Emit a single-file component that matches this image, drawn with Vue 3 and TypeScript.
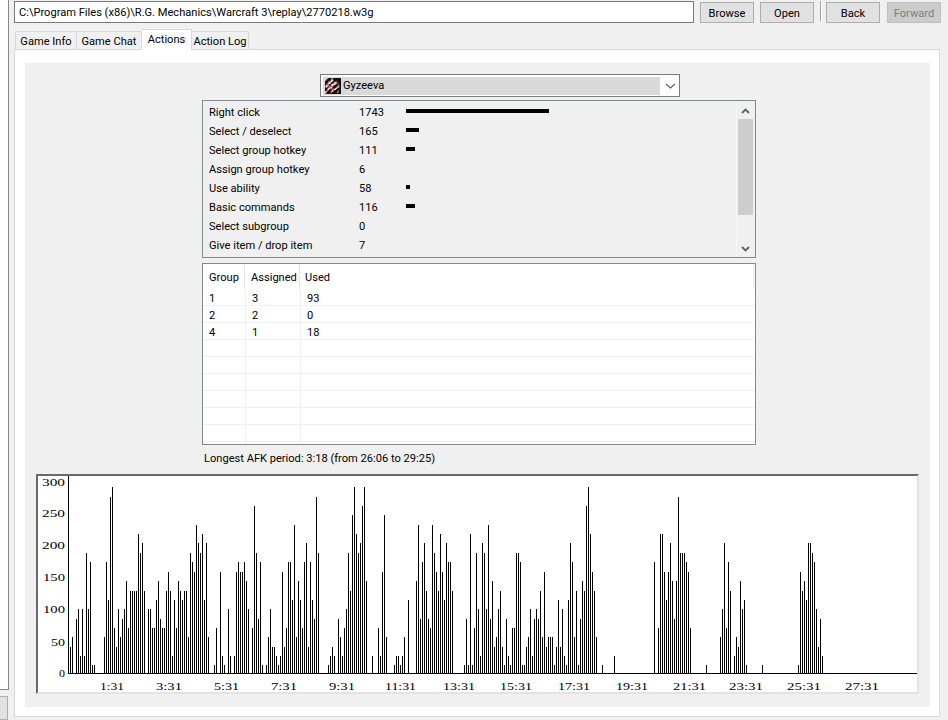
<script setup lang="ts">
const tabs = [
  { t: 'Game Info', w: 62 },
  { t: 'Game Chat', w: 65 },
  { t: 'Actions', w: 50 },
  { t: 'Action Log', w: 57 },
]
const actions = [
  { name: 'Right click', n: 1743, w: 143 },
  { name: 'Select / deselect', n: 165, w: 13 },
  { name: 'Select group hotkey', n: 111, w: 9 },
  { name: 'Assign group hotkey', n: 6, w: 0 },
  { name: 'Use ability', n: 58, w: 4 },
  { name: 'Basic commands', n: 116, w: 9 },
  { name: 'Select subgroup', n: 0, w: 0 },
  { name: 'Give item / drop item', n: 7, w: 0 },
]
const groups: string[][] = [
  ['1', '3', '93'],
  ['2', '2', '0'],
  ['4', '1', '18'],
  ['', '', ''],
  ['', '', ''],
  ['', '', ''],
  ['', '', ''],
  ['', '', ''],
  ['', '', ''],
  ['', '', ''],
]
const segs: [number, number[]][] = [
  [70, [516,486,0,432,402,543,402,543,234,402,261,570,570,0,0,0,0,
    486,261,375,66,36,459,516,402,486,432,402,318,459,348,348,348,348,177,234,204,348,0,
    402,402,459,459,375,318,432,459,459,348,291,348,543,375,459,318,348,375,348,348,486,234,261,291,150,204,234,177,375,204,486,0,0,
    570,459,0,291,543,570,0,402,543,0,543,291,261,291,291,261,318,402,0,459,93,234,432,261,570,0,570,486,402,516,516,543,570,543,291,516,459,261,261,375,150,486,318,375,459,261,204,516,261,375,432,66,234]],
  [328, [570,543,516,543,0,432,486,543,459,402,234,348,120,36,177,234,204,93,36,318]],
  [372, [543]],
  [378, [459,543,291,120,486]],
  [394, [570,543,543,570,543,486,0,375]],
  [416, [318,150,432,261,204,348,432,459,150,234,291,348,177,291,375,204,261,261,348]],
  [464, [570,432,570,177,570,459,234,402,543,204,234,402,150,432,318,516,486,402,348,516,570,432,543,570,459,459,234,234,261,570,570,516,486,402,543,432,402,432,348,486,291,516,486,486,486,570,516,375,516,402,543,570,375,204,261,486,348,570,432,318,348,93,36,177,291,348,486]],
  [602, [570]],
  [614, [543]],
  [654, [261,0,459,177,177,291,375,291,204,318,432,318,66,234,234,234,261,291,459]],
  [706, [570]],
  [720, [486,402,204,459,261,348,0,543,486,516,318,402,375,570]],
  [762, [570]],
  [798, [570,291,348,318,375,204,204,234,261,402,516,432,543]],
]
const bars = segs.flatMap(([x, tops]) =>
  tops.flatMap((t, i) => {
    if (!t) return []
    const y = 475 + Math.round(t / 3)
    return [{ x: x + i * 2, y, h: 673 - y }]
  }),
)
const yLabels = [
  { t: '300', x: 42, w: 23, y: 486 },
  { t: '250', x: 42, w: 23, y: 517 },
  { t: '200', x: 42, w: 23, y: 549 },
  { t: '150', x: 43, w: 22, y: 581 },
  { t: '100', x: 43, w: 22, y: 613 },
  { t: '50', x: 51, w: 14, y: 646 },
  { t: '0', x: 59, w: 6, y: 677 },
]
const xLabels = [
  { t: '1:31', x: 100, w: 24 },
  { t: '3:31', x: 156, w: 26 },
  { t: '5:31', x: 214, w: 25 },
  { t: '7:31', x: 271, w: 26 },
  { t: '9:31', x: 329, w: 26 },
  { t: '11:31', x: 385, w: 31 },
  { t: '13:31', x: 443, w: 32 },
  { t: '15:31', x: 500, w: 32 },
  { t: '17:31', x: 558, w: 32 },
  { t: '19:31', x: 616, w: 32 },
  { t: '21:31', x: 673, w: 33 },
  { t: '23:31', x: 729, w: 34 },
  { t: '25:31', x: 787, w: 34 },
  { t: '27:31', x: 845, w: 34 },
]
const palette: Record<string, string> = {
  k: '#14100f', d: '#3a2526', r: '#7a3c3e', p: '#b98288', w: '#e3d2d2', g: '#6d6264',
}
const art = [
  'wwpdkkrpkkkkkkkk',
  'wpdkkdppdkkkkkkk',
  'pdkkdrwwrkkdkkkk',
  'dkkrppwpddrrkkkk',
  'kkdpwwrkdpwprkkk',
  'kdrwwpdrpwwprdkk',
  'drppddpwwwpdkrdk',
  'rwppdrwwprkkdpdk',
  'pwwrprppdkkdrwrk',
  'rpdrpwwrkkdpwpdk',
  'kdrwwppdrrwwrkkk',
  'kdpwrddppwwdkkdk',
  'drprkdrwpdkkdrkk',
  'pwdkkdpwdkkkrpkk',
  'wrkkkrpkkkkdpdkk',
  'pdkkkdkkkkkkdkkk',
]
const iconPixels = art.flatMap((row, y) =>
  row.split('').map((c, x) => ({ x, y, fill: palette[c] })),
)
</script>

<template>
  <div class="screen">
    <aside class="side">
      <div class="side-box"></div>
      <div class="side-btn"></div>
    </aside>
    <main class="main">
      <div class="toolbar">
        <div class="path">C:\Program Files (x86)\R.G. Mechanics\Warcraft 3\replay\2770218.w3g</div>
        <button class="btn">Browse</button>
        <button class="btn">Open</button>
        <span class="sep"></span>
        <button class="btn">Back</button>
        <button class="btn off">Forward</button>
      </div>
      <div class="tabs">
        <div
          v-for="t in tabs"
          :key="t.t"
          class="tab"
          :class="{ on: t.t === 'Actions' }"
          :style="{ width: t.w + 'px' }"
        >{{ t.t }}</div>
      </div>
      <section class="panel">
        <div class="inner">
          <div class="combo">
            <div class="combo-sel">
              <svg class="icon" width="16" height="16" viewBox="0 0 16 16" shape-rendering="crispEdges">
                <rect v-for="(p, i) in iconPixels" :key="i" :x="p.x" :y="p.y" width="1" height="1" :fill="p.fill" />
              </svg>
              <span>Gyzeeva</span>
            </div>
            <svg class="combo-arrow" width="11" height="6" viewBox="0 0 11 6">
              <path d="M1 .8 5.5 5 10 .8" fill="none" stroke="#555" stroke-width="1.1" />
            </svg>
          </div>
          <div class="list">
            <div class="list-body">
              <div v-for="a in actions" :key="a.name" class="list-row">
                <span class="l-name">{{ a.name }}</span>
                <span class="l-num">{{ a.n }}</span>
                <span class="l-bar" :style="{ width: a.w + 'px' }"></span>
              </div>
            </div>
            <div class="scroll">
              <svg class="arr" width="9" height="6" viewBox="0 0 9 6">
                <path d="M1 5 4.5 1.5 8 5" fill="none" stroke="#606060" stroke-width="1.8" />
              </svg>
              <div class="thumb"></div>
              <svg class="arr arr-d" width="9" height="6" viewBox="0 0 9 6">
                <path d="M1 1 4.5 4.5 8 1" fill="none" stroke="#606060" stroke-width="1.8" />
              </svg>
            </div>
          </div>
          <div class="table">
            <div class="t-head">
              <span class="h1">Group</span>
              <span class="h2">Assigned</span>
              <span class="h3">Used</span>
            </div>
            <div class="t-body">
              <div v-for="(g, i) in groups" :key="i" class="t-row">
                <span class="c1">{{ g[0] }}</span>
                <span class="c2">{{ g[1] }}</span>
                <span class="c3">{{ g[2] }}</span>
              </div>
            </div>
          </div>
          <p class="afk">Longest AFK period: 3:18 (from 26:06 to 29:25)</p>
          <div class="chart">
            <svg class="plot" width="879" height="216" viewBox="38 476 879 216" shape-rendering="crispEdges">
              <rect x="68" y="476" width="1" height="198" fill="#000" />
              <rect x="68" y="673" width="849" height="1" fill="#000" />
              <rect v-for="(b, i) in bars" :key="i" :x="b.x" :y="b.y" width="1" :height="b.h" fill="#000" />
              <g class="ax" shape-rendering="auto">
                <text v-for="l in yLabels" :key="l.t" :x="l.x" :y="l.y" :textLength="l.w" lengthAdjust="spacingAndGlyphs">{{ l.t }}</text>
                <text v-for="l in xLabels" :key="l.t" :x="l.x" y="690" :textLength="l.w" lengthAdjust="spacingAndGlyphs">{{ l.t }}</text>
              </g>
            </svg>
          </div>
        </div>
      </section>
    </main>
  </div>
</template>

<style>
html, body { margin: 0; background: #f0f0f0; }
</style>

<style scoped>
.screen {
  width: 948px;
  height: 720px;
  overflow: hidden;
  display: flex;
  background: #f0f0f0;
  color: #000;
  font-family: Roboto, "Noto Sans", sans-serif;
  font-size: 11.1px;
  line-height: 15px;
}
.side { width: 9px; flex: none; display: flex; flex-direction: column; }
.side-box {
  height: 692px;
  box-sizing: border-box;
  background: #fff;
  border-right: 1px solid #828790;
  border-bottom: 1px solid #828790;
}
.side-btn {
  margin-top: 6px;
  width: 8px;
  height: 24px;
  box-sizing: border-box;
  background: #e1e1e1;
  border: 1px solid #adadad;
  border-left: 0;
}
.main { margin-left: 5px; width: 926px; flex: none; display: flex; flex-direction: column; }
.toolbar { display: flex; align-items: flex-start; padding-top: 1px; height: 22px; }
.path {
  flex: none;
  width: 680px;
  height: 22px;
  box-sizing: border-box;
  border: 1px solid #7a7a7a;
  background: #fff;
  padding: 3px 0 0 4px;
  white-space: nowrap;
}
.btn {
  flex: none;
  width: 54px;
  height: 21px;
  margin: 1px 0 0 6px;
  padding: 1px 0 0;
  box-sizing: border-box;
  background: #e1e1e1;
  border: 1px solid #adadad;
  font: inherit;
  color: #000;
}
.btn.off { background: #ccc; border-color: #bfbfbf; color: #7d7d7d; margin-left: 7px; }
.sep { flex: none; width: 1px; height: 20px; margin: 0 0 0 6px; background: #a0a0a0; border-right: 1px solid #fff; }
.sep + .btn { margin-left: 4px; }
.tabs { display: flex; margin: 6px 0 0 1px; height: 20px; align-items: flex-end; position: relative; z-index: 1; }
.tab {
  height: 18px;
  box-sizing: border-box;
  padding-top: 2px;
  text-align: center;
  background: #f0f0f0;
  border: 1px solid #d9d9d9;
  border-bottom: 0;
  white-space: nowrap;
}
.tab + .tab { border-left: 0; }
.tab.on {
  height: 21px;
  background: #fff;
  padding-top: 2px;
  margin-bottom: -1px;
  position: relative;
}
.panel {
  width: 926px;
  height: 668px;
  box-sizing: border-box;
  background: #fff;
  border: 1px solid #d9d9d9;
  padding: 13px 9px 9px 10px;
}
.inner { background: #f0f0f0; height: 644px; box-sizing: border-box; padding-top: 11px; }
.combo {
  margin-left: 295px;
  width: 360px;
  height: 23px;
  box-sizing: border-box;
  border: 1px solid #7a7a7a;
  background: #fff;
  padding: 2px;
  display: flex;
  align-items: center;
}
.combo-sel {
  width: 337px;
  height: 18px;
  background: #d9d9d9;
  display: flex;
  align-items: center;
  padding-left: 2px;
  box-sizing: border-box;
}
.icon { margin-right: 2px; }
.combo-arrow { margin-left: 5px; }
.list {
  margin: 3px 0 0 177px;
  width: 554px;
  height: 158px;
  box-sizing: border-box;
  border: 1px solid #828790;
  display: flex;
}
.list-body { flex: 1; padding: 2px 0 0 6px; }
.list-row { height: 19px; display: flex; align-items: center; }
.l-name { width: 150px; flex: none; }
.l-num { width: 47px; flex: none; }
.l-bar { height: 4px; background: #000; margin-top: -3px; }
.scroll {
  width: 16px;
  margin: 0 2px 0 0;
  display: flex;
  flex-direction: column;
  align-items: center;
  border-left: 1px solid #f7f7f7;
}
.arr { margin-top: 7px; flex: none; }
.thumb { width: 15px; height: 96px; background: #cdcdcd; margin-top: 5px; flex: none; }
.arr-d { margin-top: 31px; }
.table {
  margin: 5px 0 0 177px;
  width: 554px;
  height: 182px;
  box-sizing: border-box;
  border: 1px solid #828790;
  background: #fff;
  overflow: hidden;
}
.t-head { height: 25px; display: flex; align-items: center; }
.t-head span { height: 25px; box-sizing: border-box; padding: 6px 0 0 6px; border-right: 1px solid #e5e5e5; }
.h1 { width: 42px; }
.h2 { width: 55px; }
.h3 { width: 454px; padding-left: 5px !important; }
.t-row { height: 17px; box-sizing: border-box; border-bottom: 1px solid #f0f0f0; display: flex; }
.t-row span { height: 16px; box-sizing: border-box; border-right: 1px solid #f0f0f0; padding: 2px 0 0 6px; line-height: 16px; }
.c1 { width: 43px; }
.c2 { width: 55px; }
.c3 { flex: 1; border-right: 0 !important; }
.afk { margin: 6px 0 0 179px; height: 15px; line-height: 16px; }
.chart {
  margin: 8px 0 0 11px;
  width: 883px;
  height: 220px;
  box-sizing: border-box;
  background: #fff;
  border: 2px solid #e3e3e3;
  border-top-color: #696969;
  border-left-color: #696969;
}
.plot { display: block; }
.ax { font-family: "Liberation Serif", serif; font-size: 11px; fill: #000; }
</style>
